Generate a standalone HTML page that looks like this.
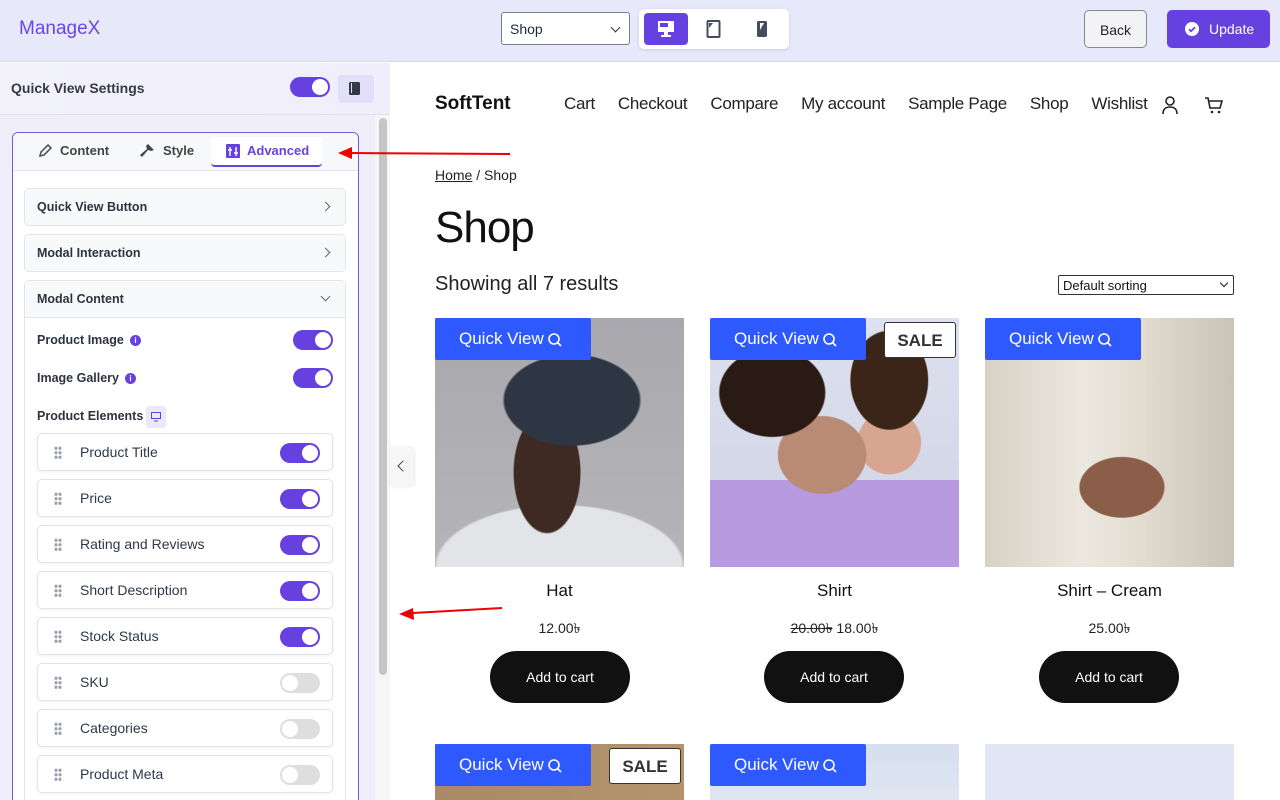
<!DOCTYPE html>
<html style="width:1280px;height:800px;overflow:hidden"><head><meta charset="utf-8"><style>
*{box-sizing:border-box;margin:0;padding:0}
body{width:1280px;height:800px;overflow:hidden;font-family:"Liberation Sans",sans-serif;background:#fff;position:relative;color:#1f2937}
.a{position:absolute}
.tg{position:absolute;width:40px;height:20px;border-radius:10px;background:#6741e0}
.tg::after{content:"";position:absolute;right:2px;top:2px;width:16px;height:16px;border-radius:50%;background:#fff}
.tg.off{background:#dedede;width:40px}
.tg.off::after{right:auto;left:2px}
.acc{position:absolute;left:24px;width:322px;height:38px;border:1px solid #e3e5ea;border-radius:5px;background:#f8f9fb;font-size:12.5px;font-weight:bold;color:#2d3340;padding:11px 12px}
.chev{position:absolute;right:16px;top:14px;width:7px;height:7px;border-right:1.5px solid #666;border-top:1.5px solid #666;transform:rotate(45deg)}
.it{position:absolute;left:37px;width:296px;height:38px;border:1px solid #e1e3ea;border-radius:5px;background:#fff;box-shadow:0 1px 3px rgba(0,0,0,.06);font-size:14px;color:#2f3848;padding:10px 0 0 42px}
.it .tg{top:9px;left:242px}
.dots{position:absolute;left:16px;top:12px;width:8px;height:13px;background:radial-gradient(circle,#9aa0ad 1.5px,transparent 1.8px) 0 0/4px 4.5px}
.qv{position:absolute;width:156px;height:42px;background:#2d59ff;color:#fff;font-size:17px;padding:11px 0 0 24px;border-radius:2px}
.qv svg{position:absolute;left:112px;top:14px}
.sale{position:absolute;width:72px;height:36px;border:1px solid #333;background:#fff;border-radius:3px;font-size:18px;color:#333;text-align:center;padding-top:8px}
.pt{position:absolute;width:249px;text-align:center;font-size:17px;color:#111}
.pr{position:absolute;width:249px;text-align:center;font-size:14px;color:#222}
.btn{position:absolute;width:140px;height:52px;border-radius:26px;background:#111;color:#fff;font-size:14px;text-align:center;padding-top:18px}
.nav span{margin-right:23px}
</style></head><body>
<div class="a" style="left:0;top:0;width:1280px;height:62px;background:#e8e8fb;border-bottom:1px solid #d8d8ee"></div>
<div class="a" style="left:19px;top:18px;font-size:19px;color:#6b45e6">ManageX</div>
<div class="a" style="left:501px;top:12px;width:129px;height:33px;border:1px solid #7a7f8a;border-radius:3px;background:#fff;font-size:14px;padding:8px 8px">Shop<div class="a" style="right:10px;top:11px;width:7px;height:7px;border-right:1.5px solid #333;border-bottom:1.5px solid #333;transform:rotate(45deg)"></div></div>
<div class="a" style="left:639px;top:9px;width:150px;height:40px;background:#fff;border-radius:5px;box-shadow:0 1px 3px rgba(0,0,0,.12)"></div>
<div class="a" style="left:644px;top:13px;width:44px;height:32px;background:#6741e0;border-radius:4px"></div>
<svg class="a" style="left:657px;top:20px" width="18" height="18"><rect x="1" y="1" width="16" height="11" fill="#fff"/><rect x="3" y="3" width="8" height="4" fill="#6741e0"/><rect x="7" y="12" width="4" height="3" fill="#fff"/><rect x="4" y="15" width="10" height="2" fill="#fff"/></svg>
<svg class="a" style="left:706px;top:20px" width="16" height="18"><rect x="1.5" y="1" width="12" height="16" rx="1" fill="none" stroke="#444c5e" stroke-width="2"/><path d="M3 3h4l-4 5z" fill="#444c5e"/></svg>
<svg class="a" style="left:756px;top:20px" width="12" height="18"><rect x="1" y="1" width="10" height="16" rx="1.5" fill="#444c5e"/><path d="M4 3h4l-4 7z" fill="#fff"/></svg>
<div class="a" style="left:1084px;top:10px;width:63px;height:38px;border:1px solid #888;border-radius:5px;background:#f3f3f5;font-size:14px;text-align:center;padding-top:11px;color:#222">Back</div>
<div class="a" style="left:1167px;top:10px;width:103px;height:38px;border-radius:5px;background:#6741e0;color:#fff;font-size:14px;padding:11px 0 0 42px">Update</div>
<svg class="a" style="left:1185px;top:22px" width="14" height="14"><circle cx="7" cy="7" r="7" fill="#fff"/><path d="M4 7.2l2 2 4-4" stroke="#6741e0" stroke-width="1.8" fill="none"/></svg>

<div class="a" style="left:0;top:63px;width:390px;height:737px;background:#efeefa;overflow:hidden">
</div>
<div class="a" style="left:0;top:63px;width:390px;height:52px;background:linear-gradient(90deg,#f3f2fb,#f0eefb);border-bottom:1px solid #e4e2f2"></div>
<div class="a" style="left:11px;top:80px;font-size:14px;font-weight:bold;color:#333a48">Quick View Settings</div>
<div class="tg" style="left:290px;top:77px"></div>
<div class="a" style="left:338px;top:75px;width:36px;height:28px;background:#e2dffa;border-radius:4px"></div>
<svg class="a" style="left:348px;top:81px" width="14" height="15"><rect x="1" y="1" width="11" height="13" rx="1.5" fill="#333a48"/><rect x="3" y="2" width="1" height="10" fill="#e2dffa"/></svg>
<div class="a" style="left:375px;top:115px;width:15px;height:685px;background:#f6f6f8"></div>
<div class="a" style="left:379px;top:118px;width:8px;height:557px;background:#c5c5c5;border-radius:4px"></div>

<div class="a" style="left:0;top:0;width:390px;height:800px;overflow:hidden">
<div class="a" style="left:12px;top:132px;width:347px;height:680px;border:1.5px solid #7855e6;border-radius:6px;background:#fff"></div>
<div class="a" style="left:13px;top:133px;width:345px;height:38px;background:#f7f8fa;border-bottom:1px solid #e3e5ea;border-radius:5px 5px 0 0"></div>
<div class="a" style="left:211px;top:137px;width:111px;height:30px;background:#fff;border-bottom:2px solid #6741e0;border-radius:4px"></div>
<svg class="a" style="left:38px;top:143px" width="15" height="15"><path d="M2 13l1-4 7-7 3 3-7 7z" fill="none" stroke="#555" stroke-width="1.6"/></svg>
<div class="a" style="left:60px;top:143px;font-size:13px;font-weight:bold;color:#444">Content</div>
<svg class="a" style="left:139px;top:142px" width="18" height="17"><path d="M9 2l6 6-3 1-3-1-6 7-2-2 7-6-1-3z" fill="#444"/></svg>
<div class="a" style="left:163px;top:143px;font-size:13px;font-weight:bold;color:#444">Style</div>
<svg class="a" style="left:226px;top:144px" width="14" height="14"><rect width="14" height="14" rx="1" fill="#6741e0"/><path d="M4 3v9M10 3v9M2 6h4M8 9h4" stroke="#fff" stroke-width="1.4"/></svg>
<div class="a" style="left:247px;top:143px;font-size:13px;font-weight:bold;color:#6741e0">Advanced</div>

<div class="acc" style="top:188px">Quick View Button<div class="chev"></div></div>
<div class="acc" style="top:234px">Modal Interaction<div class="chev"></div></div>
<div class="acc" style="top:280px;height:540px;background:#fff">&nbsp;</div>
<div class="a" style="left:25px;top:281px;width:320px;height:37px;background:#f8f9fb;border-bottom:1px solid #e3e5ea;font-size:12.5px;font-weight:bold;color:#2d3340;padding:11px 12px">Modal Content<div class="a" style="right:16px;top:12px;width:7px;height:7px;border-right:1.5px solid #666;border-bottom:1.5px solid #666;transform:rotate(45deg)"></div></div>
<div class="a" style="left:37px;top:333px;font-size:12.5px;font-weight:bold;color:#2d3340">Product Image</div>
<div class="a" style="left:130px;top:335px;width:11px;height:11px;border-radius:50%;background:#6741e0;color:#fff;font-size:8px;text-align:center;line-height:11px;font-weight:bold">i</div>
<div class="tg" style="left:293px;top:330px"></div>
<div class="a" style="left:37px;top:371px;font-size:12.5px;font-weight:bold;color:#2d3340">Image Gallery</div>
<div class="a" style="left:125px;top:373px;width:11px;height:11px;border-radius:50%;background:#6741e0;color:#fff;font-size:8px;text-align:center;line-height:11px;font-weight:bold">i</div>
<div class="tg" style="left:293px;top:368px"></div>
<div class="a" style="left:37px;top:409px;font-size:12.5px;font-weight:bold;color:#2d3340">Product Elements</div>
<div class="a" style="left:146px;top:406px;width:20px;height:22px;background:#ebe8fb;border-radius:3px"></div>
<svg class="a" style="left:151px;top:412px" width="10" height="10"><rect x=".5" y=".5" width="9" height="6" fill="none" stroke="#6741e0"/><path d="M3 9h4" stroke="#6741e0"/></svg>

<div class="it" style="top:433px"><div class="dots"></div>Product Title<div class="tg"></div></div>
<div class="it" style="top:479px"><div class="dots"></div>Price<div class="tg"></div></div>
<div class="it" style="top:525px"><div class="dots"></div>Rating and Reviews<div class="tg"></div></div>
<div class="it" style="top:571px"><div class="dots"></div>Short Description<div class="tg"></div></div>
<div class="it" style="top:617px"><div class="dots"></div>Stock Status<div class="tg"></div></div>
<div class="it" style="top:663px"><div class="dots"></div>SKU<div class="tg off"></div></div>
<div class="it" style="top:709px"><div class="dots"></div>Categories<div class="tg off"></div></div>
<div class="it" style="top:755px"><div class="dots"></div>Product Meta<div class="tg off"></div></div>
</div>

<div class="a" style="left:390px;top:447px;width:24px;height:40px;background:#f6f6f6;border-radius:0 5px 5px 0;box-shadow:1px 0 3px rgba(0,0,0,.08)"></div>
<div class="a" style="left:399px;top:462px;width:8px;height:8px;border-left:1.5px solid #444;border-bottom:1.5px solid #444;transform:rotate(45deg)"></div>

<div class="a" style="left:435px;top:93px;font-size:19px;font-weight:bold;color:#111">SoftTent</div>
<div class="a nav" style="left:564px;top:94px;font-size:17px;color:#222;white-space:nowrap;letter-spacing:-.3px"><span>Cart</span><span>Checkout</span><span>Compare</span><span>My account</span><span>Sample Page</span><span>Shop</span><span>Wishlist</span></div>
<svg class="a" style="left:1160px;top:95px" width="20" height="20"><circle cx="10" cy="6" r="4" fill="none" stroke="#222" stroke-width="1.6"/><path d="M3 19c0-5 3-7 7-7s7 2 7 7" fill="none" stroke="#222" stroke-width="1.6"/></svg>
<svg class="a" style="left:1204px;top:96px" width="20" height="18"><path d="M1 2h3l2 10h10l2-7H5" fill="none" stroke="#222" stroke-width="1.6"/><circle cx="8" cy="16" r="1.3" fill="#222"/><circle cx="15" cy="16" r="1.3" fill="#222"/></svg>
<div class="a" style="left:435px;top:167px;font-size:14px;color:#222"><u>Home</u> / Shop</div>
<div class="a" style="left:435px;top:203px;font-size:44px;color:#111;letter-spacing:-1px">Shop</div>
<div class="a" style="left:435px;top:273px;font-size:20px;color:#222">Showing all 7 results</div>
<div class="a" style="left:1058px;top:275px;width:176px;height:20px;border:1px solid #333;border-radius:2px;font-size:13px;padding:2px 4px;color:#111">Default sorting<div class="a" style="right:6px;top:4px;width:6px;height:6px;border-right:1.5px solid #111;border-bottom:1.5px solid #111;transform:rotate(45deg)"></div></div>

<div class="a" style="left:435px;top:318px;width:249px;height:249px;background:radial-gradient(ellipse 45% 30% at 55% 33%,#2e3644 60%,transparent 62%),radial-gradient(ellipse 22% 40% at 45% 62%,#3e2a22 60%,transparent 62%),radial-gradient(ellipse 70% 35% at 50% 100%,#e3e4e8 70%,transparent 72%),linear-gradient(#a8a8ad,#b5b5b9)"></div>
<div class="a" style="left:710px;top:318px;width:249px;height:249px;background:radial-gradient(ellipse 30% 25% at 25% 30%,#2a1a14 70%,transparent 72%),radial-gradient(ellipse 22% 28% at 72% 25%,#3b2418 70%,transparent 72%),radial-gradient(ellipse 25% 22% at 45% 55%,#b98a74 70%,transparent 72%),radial-gradient(ellipse 18% 18% at 72% 50%,#d8a690 70%,transparent 72%),linear-gradient(transparent 65%,#b79ae0 65%),linear-gradient(#dde0ee,#cfd3e4)"></div>
<div class="a" style="left:985px;top:318px;width:249px;height:249px;background:radial-gradient(ellipse 28% 20% at 55% 68%,#8a5e48 60%,transparent 62%),linear-gradient(90deg,#d8d2c5,#ece8df 40%,#e4ded2 60%,#c9c3b8)"></div>
<div class="qv" style="left:435px;top:318px">Quick View<svg width="16" height="16"><circle cx="7" cy="7" r="5" fill="none" stroke="#fff" stroke-width="1.6"/><path d="M11 11l3 3" stroke="#fff" stroke-width="1.6"/></svg></div>
<div class="qv" style="left:710px;top:318px">Quick View<svg width="16" height="16"><circle cx="7" cy="7" r="5" fill="none" stroke="#fff" stroke-width="1.6"/><path d="M11 11l3 3" stroke="#fff" stroke-width="1.6"/></svg></div>
<div class="qv" style="left:985px;top:318px">Quick View<svg width="16" height="16"><circle cx="7" cy="7" r="5" fill="none" stroke="#fff" stroke-width="1.6"/><path d="M11 11l3 3" stroke="#fff" stroke-width="1.6"/></svg></div>
<div class="sale" style="left:884px;top:322px;font-weight:bold;font-size:17px">SALE</div>
<div class="pt" style="left:435px;top:581px">Hat</div>
<div class="pt" style="left:710px;top:581px">Shirt</div>
<div class="pt" style="left:985px;top:581px">Shirt – Cream</div>
<div class="pr" style="left:435px;top:617px">12.00৳</div>
<div class="pr" style="left:710px;top:617px"><s>20.00৳</s> 18.00৳</div>
<div class="pr" style="left:985px;top:617px">25.00৳</div>
<div class="btn" style="left:490px;top:651px">Add to cart</div>
<div class="btn" style="left:764px;top:651px">Add to cart</div>
<div class="btn" style="left:1039px;top:651px">Add to cart</div>

<div class="a" style="left:435px;top:744px;width:249px;height:56px;background:linear-gradient(90deg,#a88a66,#b5946c)"></div>
<div class="a" style="left:710px;top:744px;width:249px;height:56px;background:linear-gradient(#d6dfee,#dfe5f1)"></div>
<div class="a" style="left:985px;top:744px;width:249px;height:56px;background:#e2e6f4"></div>
<div class="qv" style="left:435px;top:744px">Quick View<svg width="16" height="16"><circle cx="7" cy="7" r="5" fill="none" stroke="#fff" stroke-width="1.6"/><path d="M11 11l3 3" stroke="#fff" stroke-width="1.6"/></svg></div>
<div class="qv" style="left:710px;top:744px">Quick View<svg width="16" height="16"><circle cx="7" cy="7" r="5" fill="none" stroke="#fff" stroke-width="1.6"/><path d="M11 11l3 3" stroke="#fff" stroke-width="1.6"/></svg></div>
<div class="sale" style="left:609px;top:748px;font-weight:bold;font-size:17px">SALE</div>

<svg class="a" style="left:330px;top:140px" width="190" height="30"><path d="M180 14L20 13" stroke="#e00" stroke-width="2"/><path d="M8 13l14-6v12z" fill="#e00"/></svg>
<svg class="a" style="left:395px;top:600px" width="115" height="25"><path d="M107 8L18 13" stroke="#e00" stroke-width="2"/><path d="M4 14l14-6 1 12z" fill="#e00"/></svg>
</body></html>
